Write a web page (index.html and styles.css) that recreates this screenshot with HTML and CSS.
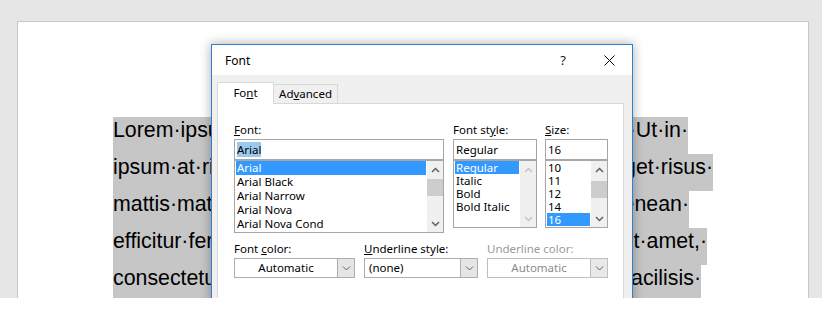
FILE: index.html
```html
<!DOCTYPE html>
<html>
<head>
<meta charset="utf-8">
<title>Font dialog</title>
<link rel="stylesheet" href="styles.css">
</head>
<body>
<div class="workspace">
  <div class="page">
    <div class="doc">
      <div class="line w1"><span>Lorem·ipsum·dolor·sit</span><span>·Ut·in·</span></div>
      <div class="line w2"><span>ipsum·at·risus·vel</span><span>eget·risus·</span></div>
      <div class="line w3"><span>mattis·mattis·nec</span><span>Aenean·</span></div>
      <div class="line w4"><span>efficitur·fermentum</span><span>sit·amet,·</span></div>
      <div class="line w5"><span>consectetur·ac·nisl</span><span>facilisis·</span></div>
      <div class="line w6"><span>nulla·vitae·elit</span><span>libero·</span></div>
    </div>
  </div>

  <div class="dialog">
    <div class="titlebar">
      <span class="title">Font</span>
      <span class="cap-btn help">?</span>
      <span class="cap-btn close">
        <svg width="11" height="11" viewBox="0 0 11 11"><path d="M0.5 0.5 L10.5 10.5 M10.5 0.5 L0.5 10.5" stroke="#000" stroke-width="1" fill="none"/></svg>
      </span>
    </div>
    <div class="dbody">
      <div class="tabs">
        <div class="tab active">Fo<u>n</u>t</div>
        <div class="tab">Ad<u>v</u>anced</div>
      </div>
      <div class="panel">
        <div class="toprow">
          <div class="col col-font">
            <div class="label"><u>F</u>ont:</div>
            <div class="field"><span class="sel-soft">Arial</span></div>
            <div class="list list-font">
              <div class="items rows14">
                <div class="item selected">Arial</div>
                <div class="item">Arial Black</div>
                <div class="item">Arial Narrow</div>
                <div class="item">Arial Nova</div>
                <div class="item">Arial Nova Cond</div>
              </div>
              <div class="sbar">
                <div class="arrow"><svg width="9" height="6" viewBox="0 0 9 6"><path d="M1 5 L4.5 1.5 L8 5" stroke="#606060" stroke-width="1.5" fill="none"/></svg></div>
                <div class="thumb t-font"></div>
                <div class="track"></div>
                <div class="arrow"><svg width="9" height="6" viewBox="0 0 9 6"><path d="M1 1 L4.5 4.5 L8 1" stroke="#606060" stroke-width="1.5" fill="none"/></svg></div>
              </div>
            </div>
          </div>
          <div class="col col-style">
            <div class="label">Font st<u>y</u>le:</div>
            <div class="field">Regular</div>
            <div class="list list-short">
              <div class="items rows13">
                <div class="item selected">Regular</div>
                <div class="item">Italic</div>
                <div class="item">Bold</div>
                <div class="item">Bold Italic</div>
              </div>
              <div class="sbar">
                <div class="arrow"><svg width="9" height="6" viewBox="0 0 9 6"><path d="M1 5 L4.5 1.5 L8 5" stroke="#c4c4c4" stroke-width="1.5" fill="none"/></svg></div>
                <div class="track"></div>
                <div class="arrow"><svg width="9" height="6" viewBox="0 0 9 6"><path d="M1 1 L4.5 4.5 L8 1" stroke="#c4c4c4" stroke-width="1.5" fill="none"/></svg></div>
              </div>
            </div>
          </div>
          <div class="col col-size">
            <div class="label"><u>S</u>ize:</div>
            <div class="field">16</div>
            <div class="list list-short">
              <div class="items rows13">
                <div class="item">10</div>
                <div class="item">11</div>
                <div class="item">12</div>
                <div class="item">14</div>
                <div class="item selected">16</div>
              </div>
              <div class="sbar">
                <div class="arrow"><svg width="9" height="6" viewBox="0 0 9 6"><path d="M1 5 L4.5 1.5 L8 5" stroke="#606060" stroke-width="1.5" fill="none"/></svg></div>
                <div class="thumb t-size"></div>
                <div class="track"></div>
                <div class="arrow"><svg width="9" height="6" viewBox="0 0 9 6"><path d="M1 1 L4.5 4.5 L8 1" stroke="#606060" stroke-width="1.5" fill="none"/></svg></div>
              </div>
            </div>
          </div>
        </div>

        <div class="bottomrow">
          <div class="col">
            <div class="label">Font <u>c</u>olor:</div>
            <div class="combo">
              <div class="value center">Automatic</div>
              <div class="dd"><svg width="9" height="5" viewBox="0 0 9 5"><path d="M1 0.5 L4.5 4 L8 0.5" stroke="#606060" stroke-width="1" fill="none"/></svg></div>
            </div>
          </div>
          <div class="col">
            <div class="label"><u>U</u>nderline style:</div>
            <div class="combo">
              <div class="value">(none)</div>
              <div class="dd"><svg width="9" height="5" viewBox="0 0 9 5"><path d="M1 0.5 L4.5 4 L8 0.5" stroke="#606060" stroke-width="1" fill="none"/></svg></div>
            </div>
          </div>
          <div class="col">
            <div class="label disabled">Underline color:</div>
            <div class="combo combo-disabled">
              <div class="value center">Automatic</div>
              <div class="dd"><svg width="9" height="5" viewBox="0 0 9 5"><path d="M1 0.5 L4.5 4 L8 0.5" stroke="#606060" stroke-width="1" fill="none"/></svg></div>
            </div>
          </div>
        </div>
      </div>
    </div>
  </div>
</div>
<div class="footer"></div>
</body>
</html>
```

FILE: styles.css
```css
* { box-sizing: border-box; }

html, body {
  margin: 0;
  padding: 0;
  background: #ffffff;
}

.workspace {
  position: relative;
  height: 298px;
  overflow: hidden;
  background: #e6e6e6;
  padding: 21px 13px 0 17px;
}

.page {
  height: 100%;
  background: #ffffff;
  border: 1px solid #c8c8c8;
  border-bottom: none;
}

.doc {
  padding: 95px 0 0 95px;
  font-family: "Liberation Sans", Arial, sans-serif;
  font-size: 21.33px;
  color: #000;
}

.line {
  display: flex;
  justify-content: space-between;
  white-space: nowrap;
  overflow: hidden;
  background: #c6c6c6;
  line-height: 24px;
  padding: 1px 0 12px 0;
}

.w1 { width: 575px; }
.w2 { width: 600px; }
.w3 { width: 576px; }
.w4 { width: 594px; }
.w5 { width: 588px; }
.w6 { width: 560px; }

.footer {
  height: 13px;
  background: #ffffff;
}

/* ---------- dialog ---------- */
.dialog {
  position: absolute;
  left: 211px;
  top: 44px;
  width: 422px;
  height: 300px;
  border: 1px solid #2b7fd4;
  background: #f0f0f0;
  box-shadow: 0 0 10px 1px rgba(0, 0, 0, 0.28);
  font-family: "Noto Sans", "Open Sans", sans-serif;
  font-size: 11.5px;
  color: #000;
}

.titlebar {
  height: 30px;
  background: #ffffff;
  display: flex;
  align-items: center;
  padding-left: 13px;
}

.title {
  flex: 1;
  font-size: 12px;
}

.cap-btn {
  width: 46px;
  height: 30px;
  display: flex;
  align-items: center;
  justify-content: center;
}

.help {
  font-size: 13px;
  color: #222;
}

.dbody {
  padding: 7px 8px 0 5px;
}

.tabs {
  display: flex;
  align-items: flex-end;
  height: 21px;
}

.tab {
  height: 19px;
  padding: 0 5px;
  line-height: 17px;
  border: 1px solid #d9d9d9;
  border-bottom: none;
  background: #f0f0f0;
  margin-left: -1px;
}

.tab.active {
  position: relative;
  z-index: 1;
  height: 22px;
  margin-bottom: -1px;
  margin-left: 0;
  width: 57px;
  text-align: center;
  line-height: 19px;
  background: #ffffff;
}

.tab:not(.active) {
  width: 65px;
  text-align: center;
}

.panel {
  background: #ffffff;
  border: 1px solid #d9d9d9;
  height: 240px;
  padding: 18px 0 0 16px;
}

.toprow {
  display: flex;
  gap: 9px;
}

.col-font { width: 210px; }
.col-style { width: 84px; }
.col-size { width: 63px; margin-left: -1px; }

.label {
  line-height: 16px;
  height: 17px;
  white-space: nowrap;
}

.label.disabled {
  color: #9a9a9a;
}

.field {
  height: 21px;
  border: 1px solid #a6a6a6;
  padding-left: 2px;
  line-height: 19px;
  white-space: nowrap;
}

.sel-soft {
  background: #99c9ef;
}

.list {
  display: flex;
  border: 1px solid #a6a6a6;
}

.list-font { height: 73px; }
.list-short { height: 68px; }

.items {
  flex: 1;
  padding: 0 1px;
  overflow: hidden;
}

.item {
  padding-left: 1px;
  white-space: nowrap;
}

.rows14 .item { height: 14px; line-height: 14px; }
.rows13 .item { height: 13px; line-height: 13px; }

.item.selected {
  background: #3399ff;
  color: #ffffff;
}

.sbar {
  width: 16px;
  background: #f0f0f0;
  display: flex;
  flex-direction: column;
}

.arrow {
  height: 17px;
  display: flex;
  align-items: center;
  justify-content: center;
}

.track { flex: 1; }

.thumb {
  background: #cdcdcd;
  height: 17px;
}

.t-font { margin-top: 1px; }
.t-size { margin-top: 3px; }

.bottomrow {
  display: flex;
  gap: 9px;
  margin-top: 8px;
}

.bottomrow .col:nth-child(1) { width: 121px; }
.bottomrow .col:nth-child(2) { width: 114px; }
.bottomrow .col:nth-child(3) { width: 121px; }

.combo {
  display: flex;
  height: 20px;
  border: 1px solid #adadad;
  background: #ffffff;
}

.value {
  flex: 1;
  line-height: 18px;
  padding-left: 4px;
  white-space: nowrap;
}

.value.center {
  text-align: center;
  padding-left: 0;
}

.dd {
  width: 17px;
  background: #e5e5e5;
  border-left: 1px solid #adadad;
  display: flex;
  align-items: center;
  justify-content: center;
}

.combo-disabled {
  border-color: #bfbfbf;
}

.combo-disabled .value {
  color: #8a8a8a;
}

.combo-disabled .dd {
  border-left-color: #bfbfbf;
  background: #e8e8e8;
}
```
